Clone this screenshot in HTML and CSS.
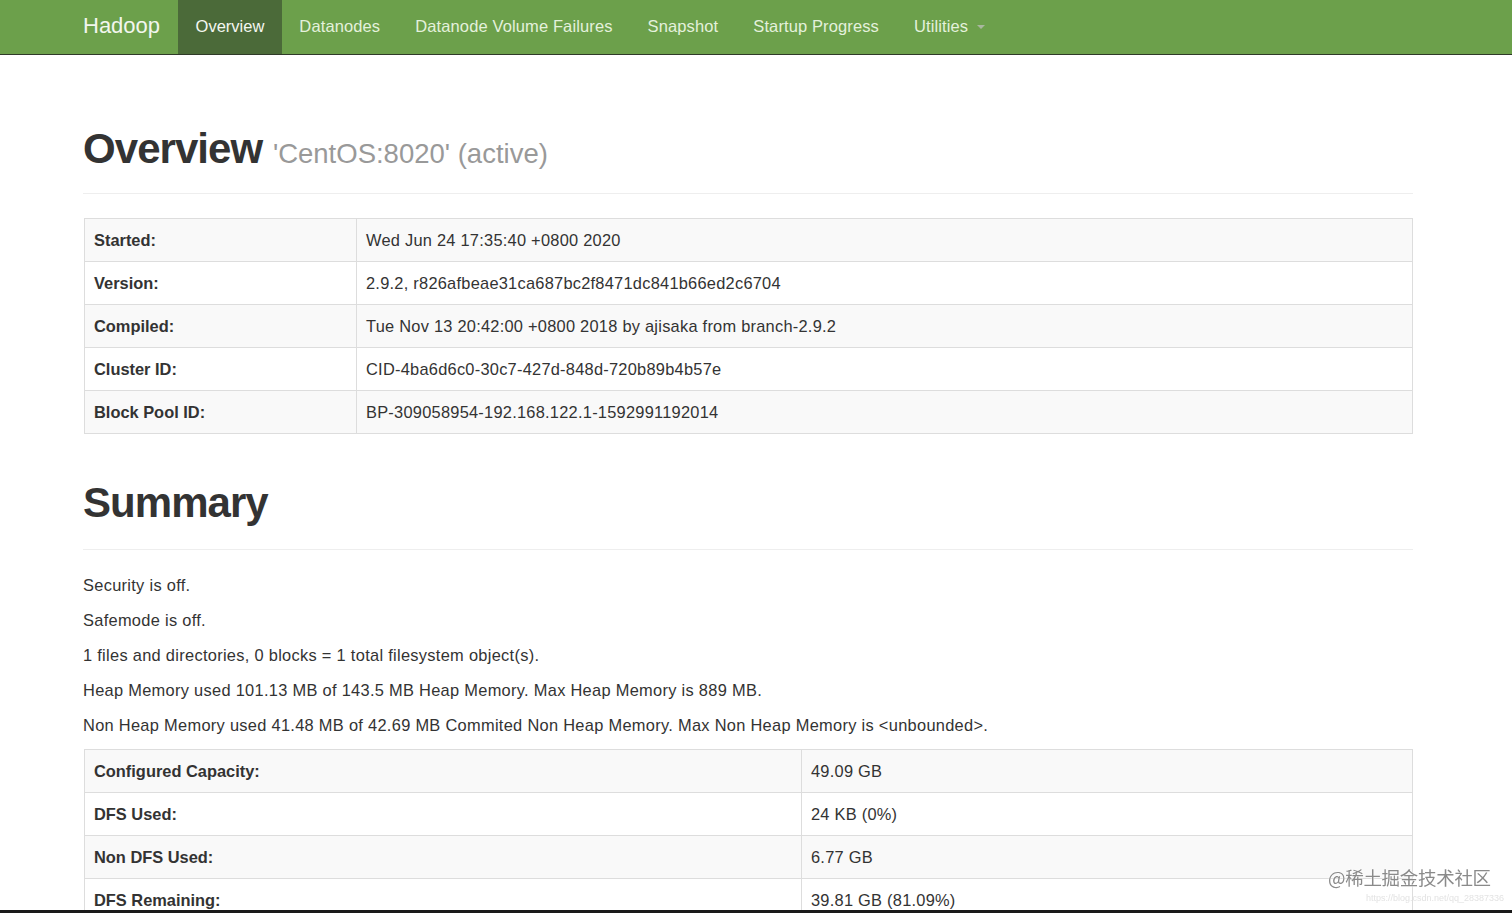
FILE: index.html
```html
<!DOCTYPE html>
<html lang="en">
<head>
<meta charset="utf-8">
<title>Namenode information</title>
<link rel="stylesheet" href="styles.css">
</head>
<body>
<header class="navbar">
  <div class="navbar-inner">
    <span class="brand">Hadoop</span>
    <ul class="nav">
      <li class="nav-item active">Overview</li>
      <li class="nav-item">Datanodes</li>
      <li class="nav-item">Datanode Volume Failures</li>
      <li class="nav-item">Snapshot</li>
      <li class="nav-item">Startup Progress</li>
      <li class="nav-item">Utilities <span class="caret"></span></li>
    </ul>
  </div>
</header>

<main class="container">
  <div class="page-header first">
    <h1>Overview <small>'CentOS:8020' (active)</small></h1>
  </div>

  <table class="table info">
    <tbody>
      <tr><th>Started:</th><td>Wed Jun 24 17:35:40 +0800 2020</td></tr>
      <tr><th>Version:</th><td>2.9.2, r826afbeae31ca687bc2f8471dc841b66ed2c6704</td></tr>
      <tr><th>Compiled:</th><td>Tue Nov 13 20:42:00 +0800 2018 by ajisaka from branch-2.9.2</td></tr>
      <tr><th>Cluster ID:</th><td>CID-4ba6d6c0-30c7-427d-848d-720b89b4b57e</td></tr>
      <tr><th>Block Pool ID:</th><td>BP-309058954-192.168.122.1-1592991192014</td></tr>
    </tbody>
  </table>

  <div class="page-header second">
    <h1>Summary</h1>
  </div>

  <p class="line first-line">Security is off.</p>
  <p class="line">Safemode is off.</p>
  <p class="line">1 files and directories, 0 blocks = 1 total filesystem object(s).</p>
  <p class="line">Heap Memory used 101.13 MB of 143.5 MB Heap Memory. Max Heap Memory is 889 MB.</p>
  <p class="line">Non Heap Memory used 41.48 MB of 42.69 MB Commited Non Heap Memory. Max Non Heap Memory is &lt;unbounded&gt;.</p>

  <table class="table summary">
    <tbody>
      <tr><th>Configured Capacity:</th><td>49.09 GB</td></tr>
      <tr><th>DFS Used:</th><td>24 KB (0%)</td></tr>
      <tr><th>Non DFS Used:</th><td>6.77 GB</td></tr>
      <tr><th>DFS Remaining:</th><td>39.81 GB (81.09%)</td></tr>
    </tbody>
  </table>
</main>

<div class="watermark">
  <span class="wm-main">@稀土掘金技术社区</span>
  <span class="wm-url">https://blog.csdn.net/qq_28387336</span>
</div>
<div class="bottom-edge"></div>
</body>
</html>
```

FILE: styles.css
```css
* {
  box-sizing: border-box;
}

html, body {
  margin: 0;
  padding: 0;
  background: #ffffff;
}

body {
  font-family: "Liberation Sans", Arial, "Noto Sans CJK SC", sans-serif;
  font-size: 16.4px;
  line-height: 23.4px;
  color: #333333;
  overflow: hidden;
  height: 913px;
}

/* ---------- navbar ---------- */
.navbar {
  background: #6ca04b;
  border-bottom: 1px solid #2f3a28;
  height: 55px;
}

.navbar-inner {
  display: flex;
  align-items: stretch;
  height: 54px;
  padding-left: 83px;
}

.brand {
  display: flex;
  align-items: center;
  font-size: 22px;
  color: #f2f6ee;
  margin-right: 18px;
  padding-bottom: 2px;
}

.nav {
  display: flex;
  list-style: none;
  margin: 0;
  padding: 0;
}

.nav-item {
  display: flex;
  align-items: center;
  padding: 0 17.5px 1px;
  font-size: 16.5px;
  letter-spacing: 0.12px;
  color: #e4f1dc;
}

.nav-item.active {
  background: #4b6a39;
  color: #f4f7f1;
  letter-spacing: 0;
}

.caret {
  display: inline-block;
  width: 0;
  height: 0;
  margin-left: 9px;
  border-top: 4px solid #a9b79f;
  border-left: 4px solid transparent;
  border-right: 4px solid transparent;
}

/* ---------- content ---------- */
.container {
  width: 1413px;
  padding-left: 83px;
}

.page-header {
  border-bottom: 1px solid #eeeeee;
}

.page-header h1 {
  margin: 0;
  font-size: 42px;
  line-height: 46px;
  font-weight: bold;
  color: #333333;
  letter-spacing: -0.95px;
}

.page-header h1 small {
  font-size: 27.5px;
  font-weight: normal;
  color: #999999;
  letter-spacing: 0;
}

.page-header.first {
  margin-top: 71px;
  padding-bottom: 16px;
  margin-bottom: 24px;
}

.page-header.second {
  margin-top: 46px;
  padding-bottom: 23px;
}

.line {
  margin: 0 0 11.6px;
  letter-spacing: 0.3px;
}

.line.first-line {
  margin-top: 24px;
}

/* ---------- tables ---------- */
.table {
  width: 1329px;
  margin-left: 1px;
  border-collapse: collapse;
  border: 1px solid #dddddd;
  table-layout: fixed;
}

.table th,
.table td {
  border: 1px solid #dddddd;
  padding: 10px 9px 8.6px 9px;
  height: 43px;
  text-align: left;
  vertical-align: top;
  line-height: 23.4px;
  white-space: nowrap;
}

.table th {
  font-weight: bold;
}

.table td {
  letter-spacing: 0.25px;
}

.table tr:nth-child(odd) {
  background: #f9f9f9;
}

.table.info th {
  width: 272px;
}

.table.summary th {
  width: 717px;
}

/* ---------- overlays ---------- */
.watermark {
  position: fixed;
  left: 1328px;
  top: 864px;
  display: flex;
  flex-direction: column;
  align-items: flex-start;
}

.wm-main {
  font-family: "Noto Sans CJK SC", sans-serif;
  font-size: 18.5px;
  line-height: 26px;
  color: #8a8a8a;
  text-shadow: 0 0 2px #ffffff, 0 0 1px #ffffff;
  letter-spacing: -0.3px;
}

.wm-url {
  font-size: 9px;
  line-height: 12px;
  color: #e3e3e3;
  margin-left: 38px;
  margin-top: 2px;
}

.bottom-edge {
  position: fixed;
  left: 0;
  right: 0;
  bottom: 0;
  height: 3px;
  background: #1a1a1a;
}
```
